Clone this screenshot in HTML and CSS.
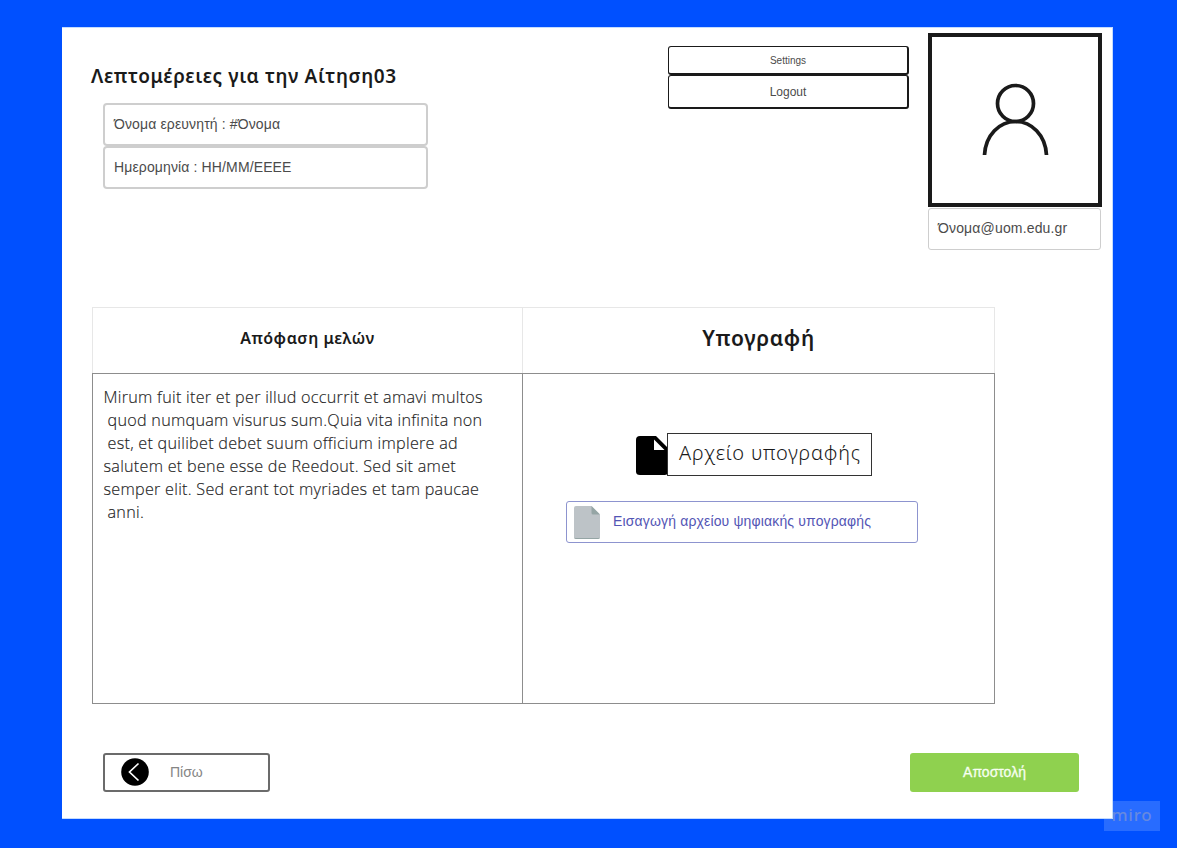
FILE: index.html
```html
<!DOCTYPE html>
<html lang="el">
<head>
<meta charset="utf-8">
<title>Λεπτομέρειες για την Αίτηση03</title>
<link rel="stylesheet" href="styles.css">
</head>
<body>
<main class="panel">
  <header class="header">
    <section class="details">
      <h1 class="title">Λεπτομέρειες για την Αίτηση03</h1>
      <div class="field"><span>Όνομα ερευνητή : #Όνομα</span></div>
      <div class="field"><span>Ημερομηνία : HH/MM/EEEE</span></div>
    </section>
    <nav class="menu">
      <button class="menu-item settings"><span>Settings</span></button>
      <button class="menu-item logout"><span>Logout</span></button>
    </nav>
    <section class="profile">
      <div class="avatar">
        <svg class="person" viewBox="0 0 68 76" fill="none" stroke="#1a1a1a" stroke-width="3.7">
          <circle cx="33.500" cy="20.500" r="18"/>
          <path d="M2.500 72C3.500 52 17.500 38.500 33.500 38.500S63.500 52 64.500 72"/>
        </svg>
      </div>
      <div class="email"><span>Όνομα@uom.edu.gr</span></div>
    </section>
  </header>

  <section class="table">
    <h2 class="head head-decision"><span>Απόφαση μελών</span></h2>
    <h2 class="head head-signature"><span>Υπογραφή</span></h2>
    <div class="cell decision">
      <p class="line">Mirum fuit iter et per illud occurrit et amavi multos</p>
      <p class="line indent">quod numquam visurus sum.Quia vita infinita non</p>
      <p class="line indent">est, et quilibet debet suum officium implere ad</p>
      <p class="line">salutem et bene esse de Reedout. Sed sit amet</p>
      <p class="line">semper elit. Sed erant tot myriades et tam paucae</p>
      <p class="line indent">anni.</p>
    </div>
    <div class="cell signature">
      <div class="file-row">
        <svg class="file-icon" viewBox="0 0 32 40">
          <path d="M4 0H20L32 12V36Q32 39 28.500 39H4Q0 39 0 35.500V4Q0 0 4 0Z" fill="#000"/>
          <path d="M18 3.500V14H28.500Z" fill="#fff"/>
        </svg>
        <div class="file-label"><span>Αρχείο υπογραφής</span></div>
      </div>
      <button class="upload">
        <svg class="doc-icon" viewBox="0 0 26 33">
          <path d="M2 0H17.500L26 8.500V31Q26 33 24 33H2Q0 33 0 31V2Q0 0 2 0Z" fill="#bdc3c7"/>
          <path d="M17.500 0L26 8.500H19Q17.500 8.500 17.500 7Z" fill="#95a5a5"/>
          <path d="M0 31Q0 33 2 33H24Q26 33 26 31Q26 32 24 32H2Q0 32 0 31Z" fill="#95a5a5"/>
        </svg>
        <span>Εισαγωγή αρχείου ψηφιακής υπογραφής</span>
      </button>
    </div>
  </section>

  <footer class="actions">
    <button class="back">
      <svg class="back-icon" viewBox="0 0 28 28" fill="none">
        <circle cx="14" cy="14" r="13.800" fill="#000"/>
        <path d="M17.500 5.500L8.500 14L17.500 22.500" stroke="#fff" stroke-width="1.700"/>
      </svg>
      <span>Πίσω</span>
    </button>
    <button class="send"><span>Αποστολή</span></button>
  </footer>
</main>
<div class="watermark">miro</div>
</body>
</html>
```
FILE: styles.css
```css
* { box-sizing: border-box; }
body {
  margin: 0;
  width: 1177px;
  height: 848px;
  padding: 27px 64px 29px 62px;
  overflow: hidden;
  background: #0050ff;
  color: #1a1a1a;
  font-family: "Liberation Sans", sans-serif;
}
h1, h2, p { margin: 0; }
span, .line, .title { white-space: nowrap; }
button {
  padding: 0;
  font-family: inherit;
  background: #fff;
}
.panel {
  height: 792px;
  background: #fff;
  border: 1px solid #c3dbff;
  border-left: 0;
  position: relative;
  z-index: 1;
}
.header {
  display: flex;
  height: 279px;
}
.details {
  width: 606px;
  padding: 34px 0 0 29px;
}
.title {
  height: 41px;
  font: 600 19px/28px "Noto Sans", sans-serif;
  letter-spacing: 0.620px;
}
.field {
  display: flex;
  align-items: center;
  width: 325px;
  height: 43px;
  margin-left: 12px;
  padding: 0 0 1px 9px;
  border: 2px solid #cecece;
  border-radius: 4px;
  color: #4b4b4b;
  font-size: 14px;
  letter-spacing: 0.130px;
}
.menu {
  display: flex;
  flex-direction: column;
  width: 260px;
  padding-top: 18px;
}
.menu-item {
  width: 241px;
  border: 2px solid #1a1a1a;
  border-width: 1.500px 2px 2px 1.500px;
  border-radius: 3px;
  color: #4b4b4b;
}
.settings { height: 29px; font-size: 10px; }
.logout { height: 34px; font-size: 12px; }
.profile { width: 174px; padding-top: 5px; }
.avatar {
  display: flex;
  height: 174px;
  padding: 46px 0 0 50px;
  border: 4px solid #1a1a1a;
}
.person { width: 68px; height: 76px; }
.email {
  display: flex;
  align-items: center;
  width: 173px;
  height: 42px;
  margin-top: 1px;
  padding: 0 0 2px 9px;
  border: 1px solid #cecece;
  border-radius: 3px;
  color: #4b4b4b;
  font-size: 14px;
  letter-spacing: 0.160px;
}
.table {
  display: grid;
  grid-template-columns: 430px 473px;
  grid-template-rows: 66px 331px;
  width: 903px;
  margin-left: 30px;
}
.head {
  display: flex;
  align-items: center;
  justify-content: center;
  border: solid #e7e7e7;
  border-width: 1px 0 0 1px;
  font-family: "Noto Sans", sans-serif;
  font-weight: 600;
}
.head-decision { padding-bottom: 5px; font-size: 16px; letter-spacing: 0.550px; }
.head-signature { padding-bottom: 5px; border-right-width: 1px; font-size: 21px; letter-spacing: 0.700px; }
.cell {
  border: 1px solid #8d8d8d;
  border-right-width: 0;
}
.decision { padding: 12px 0 0 10.500px; }
.line {
  color: #222;
  font: 300 16.200px/23px "Open Sans", sans-serif;
  letter-spacing: 0.260px;
  -webkit-text-stroke: 0.150px #222;
}
.indent { padding-left: 4px; }
.signature {
  padding: 59px 0 0 43px;
  border-right-width: 1px;
}
.file-row {
  display: flex;
  margin-left: 70px;
}
.file-icon { width: 32px; height: 40px; margin-top: 3px; }
.file-label {
  display: flex;
  align-items: center;
  width: 205px;
  height: 43px;
  margin-left: -1px;
  padding: 0 0 3px 11px;
  background: #fff;
  border: 1px solid #333;
  font: 300 20px/28px "Noto Sans", sans-serif;
  letter-spacing: 0.800px;
}
.upload {
  display: flex;
  align-items: center;
  width: 352px;
  height: 42px;
  margin-top: 25px;
  padding: 0 0 0 7px;
  border: 1px solid #8d94cf;
  border-radius: 3px;
  color: #5355b5;
  font-size: 14px;
  letter-spacing: 0.150px;
}
.upload span { margin-top: -2px; }
.doc-icon { width: 26px; height: 33px; margin-right: 13px; }
.actions {
  display: flex;
  justify-content: space-between;
  padding: 49px 34px 0 41px;
}
.back, .send { height: 39px; border-radius: 3px; font-size: 14px; }
.back {
  display: flex;
  align-items: center;
  width: 167px;
  padding-left: 16px;
  border: 2px solid #6b6b6b;
  color: #858585;
}
.back span { margin-top: -2px; }
.back-icon { width: 28px; height: 28px; margin: -2px 21px 0 0; }
.send {
  width: 169px;
  margin-right: -1px;
  background: #8fd14f;
  border: 0;
  padding-bottom: 1px;
  color: #f6fff0;
  -webkit-text-stroke: 0.3px #f6fff0;
}
.watermark {
  position: absolute;
  left: 1104px;
  top: 801px;
  width: 56px;
  height: 30px;
  background: #286cff;
  color: #6689df;
  font: 500 17px/28px "Noto Sans", sans-serif;
  letter-spacing: 0.800px;
  text-align: center;
}
```
